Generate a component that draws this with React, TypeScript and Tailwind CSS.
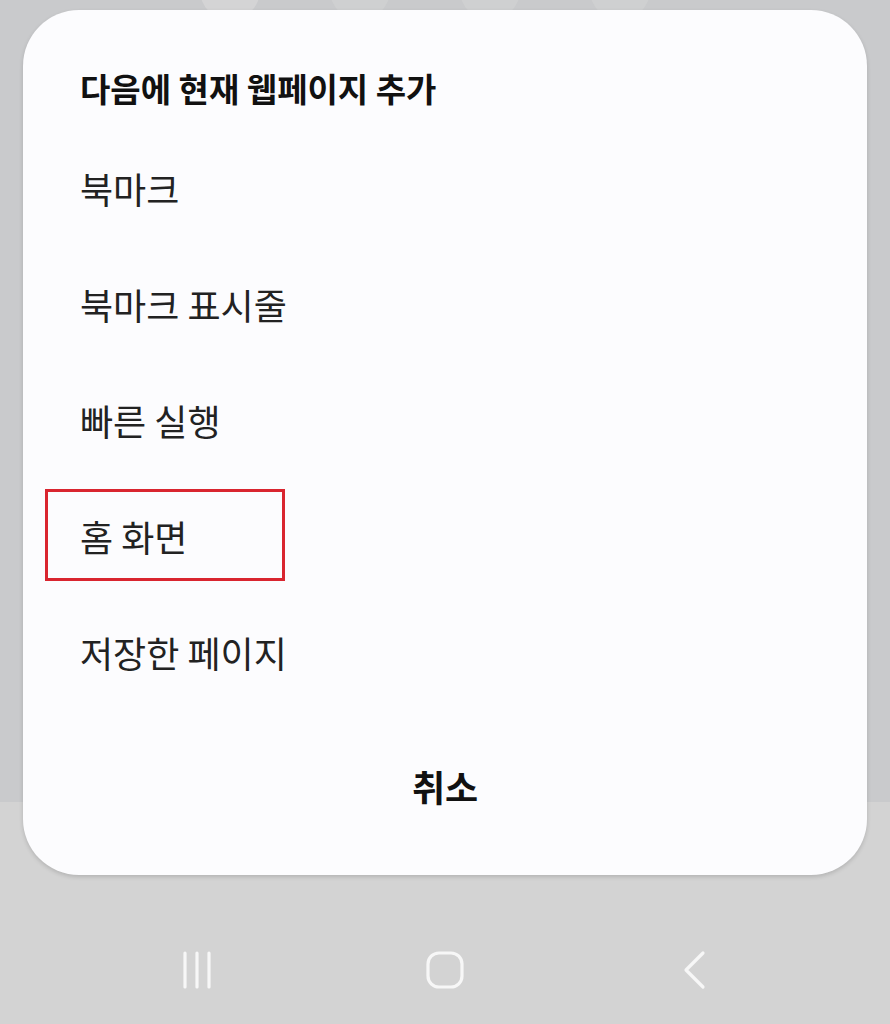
import React from "react";

const items = ["북마크", "북마크 표시줄", "빠른 실행", "홈 화면", "저장한 페이지"];

function NavBar() {
    return (
        <div className="flex items-center justify-center gap-[208px] pt-[148px]">
            <svg width="40" height="40" viewBox="0 0 40 40" fill="none">
                <g stroke="#f7f7f7" strokeWidth="3.2" strokeLinecap="round">
                    <line x1="8" y1="3" x2="8" y2="37" />
                    <line x1="20" y1="3" x2="20" y2="37" />
                    <line x1="32" y1="3" x2="32" y2="37" />
                </g>
            </svg>
            <svg width="40" height="40" viewBox="0 0 40 40" fill="none">
                <rect x="3" y="3" width="34" height="34" rx="11" stroke="#f7f7f7" strokeWidth="3.2" />
            </svg>
            <svg width="40" height="40" viewBox="0 0 40 40" fill="none">
                <path d="M30 3 L13 20 L30 37" stroke="#f7f7f7" strokeWidth="3.2" strokeLinecap="round" strokeLinejoin="round" />
            </svg>
        </div>
    );
}

function SheetItem({ label, marked }: { label: string; marked: boolean }) {
    return (
        <div className="relative flex h-[116px] items-center pl-[57px] text-[36px] leading-none text-[#222222]">
            <span className="-mt-[4px]">{label}</span>
            {marked && (
                <span className="absolute left-[22px] top-[9px] h-[92px] w-[240px] border-[3px] border-[#d9252f]" />
            )}
        </div>
    );
}

export default function App() {
    return (
        <div
            className="relative h-[1024px] w-[890px] overflow-hidden"
            style={{ fontFamily: '"Noto Sans CJK KR", "Noto Sans", sans-serif' }}
        >
            <div className="flex h-full flex-col">
                <div className="h-[802px] bg-[#c9cacc]">
                    <div className="flex gap-[70px] pl-[200px]">
                        <span className="-mt-[40px] h-[60px] w-[60px] rounded-full bg-[#d4d4d5]" />
                        <span className="-mt-[40px] h-[60px] w-[60px] rounded-full bg-[#cfd0d1]" />
                        <span className="-mt-[40px] h-[60px] w-[60px] rounded-full bg-[#cfd0d1]" />
                        <span className="-mt-[40px] h-[60px] w-[60px] rounded-full bg-[#cfd0d1]" />
                    </div>
                </div>
                <div className="flex-1 bg-[#d3d3d3]">
                    <NavBar />
                </div>
            </div>

            <div className="absolute left-[23px] top-[10px] flex h-[865px] w-[844px] flex-col rounded-[56px] bg-[#fcfcfe] shadow-[0_2px_4px_rgba(0,0,0,0.15)]">
                <div className="pl-[57px] pt-[47px] text-[33px] font-bold leading-[62px] text-[#111111]">
                    다음에 현재 웹페이지 추가
                </div>
                <div className="mt-[13px] flex flex-col">
                    {items.map(label => (
                        <SheetItem key={label} label={label} marked={label === "홈 화면"} />
                    ))}
                </div>
                <div className="mt-[18px] flex h-[116px] items-center justify-center text-[36px] font-bold text-[#111111]">
                    <span className="-mt-[4px]">취소</span>
                </div>
            </div>
        </div>
    );
}
